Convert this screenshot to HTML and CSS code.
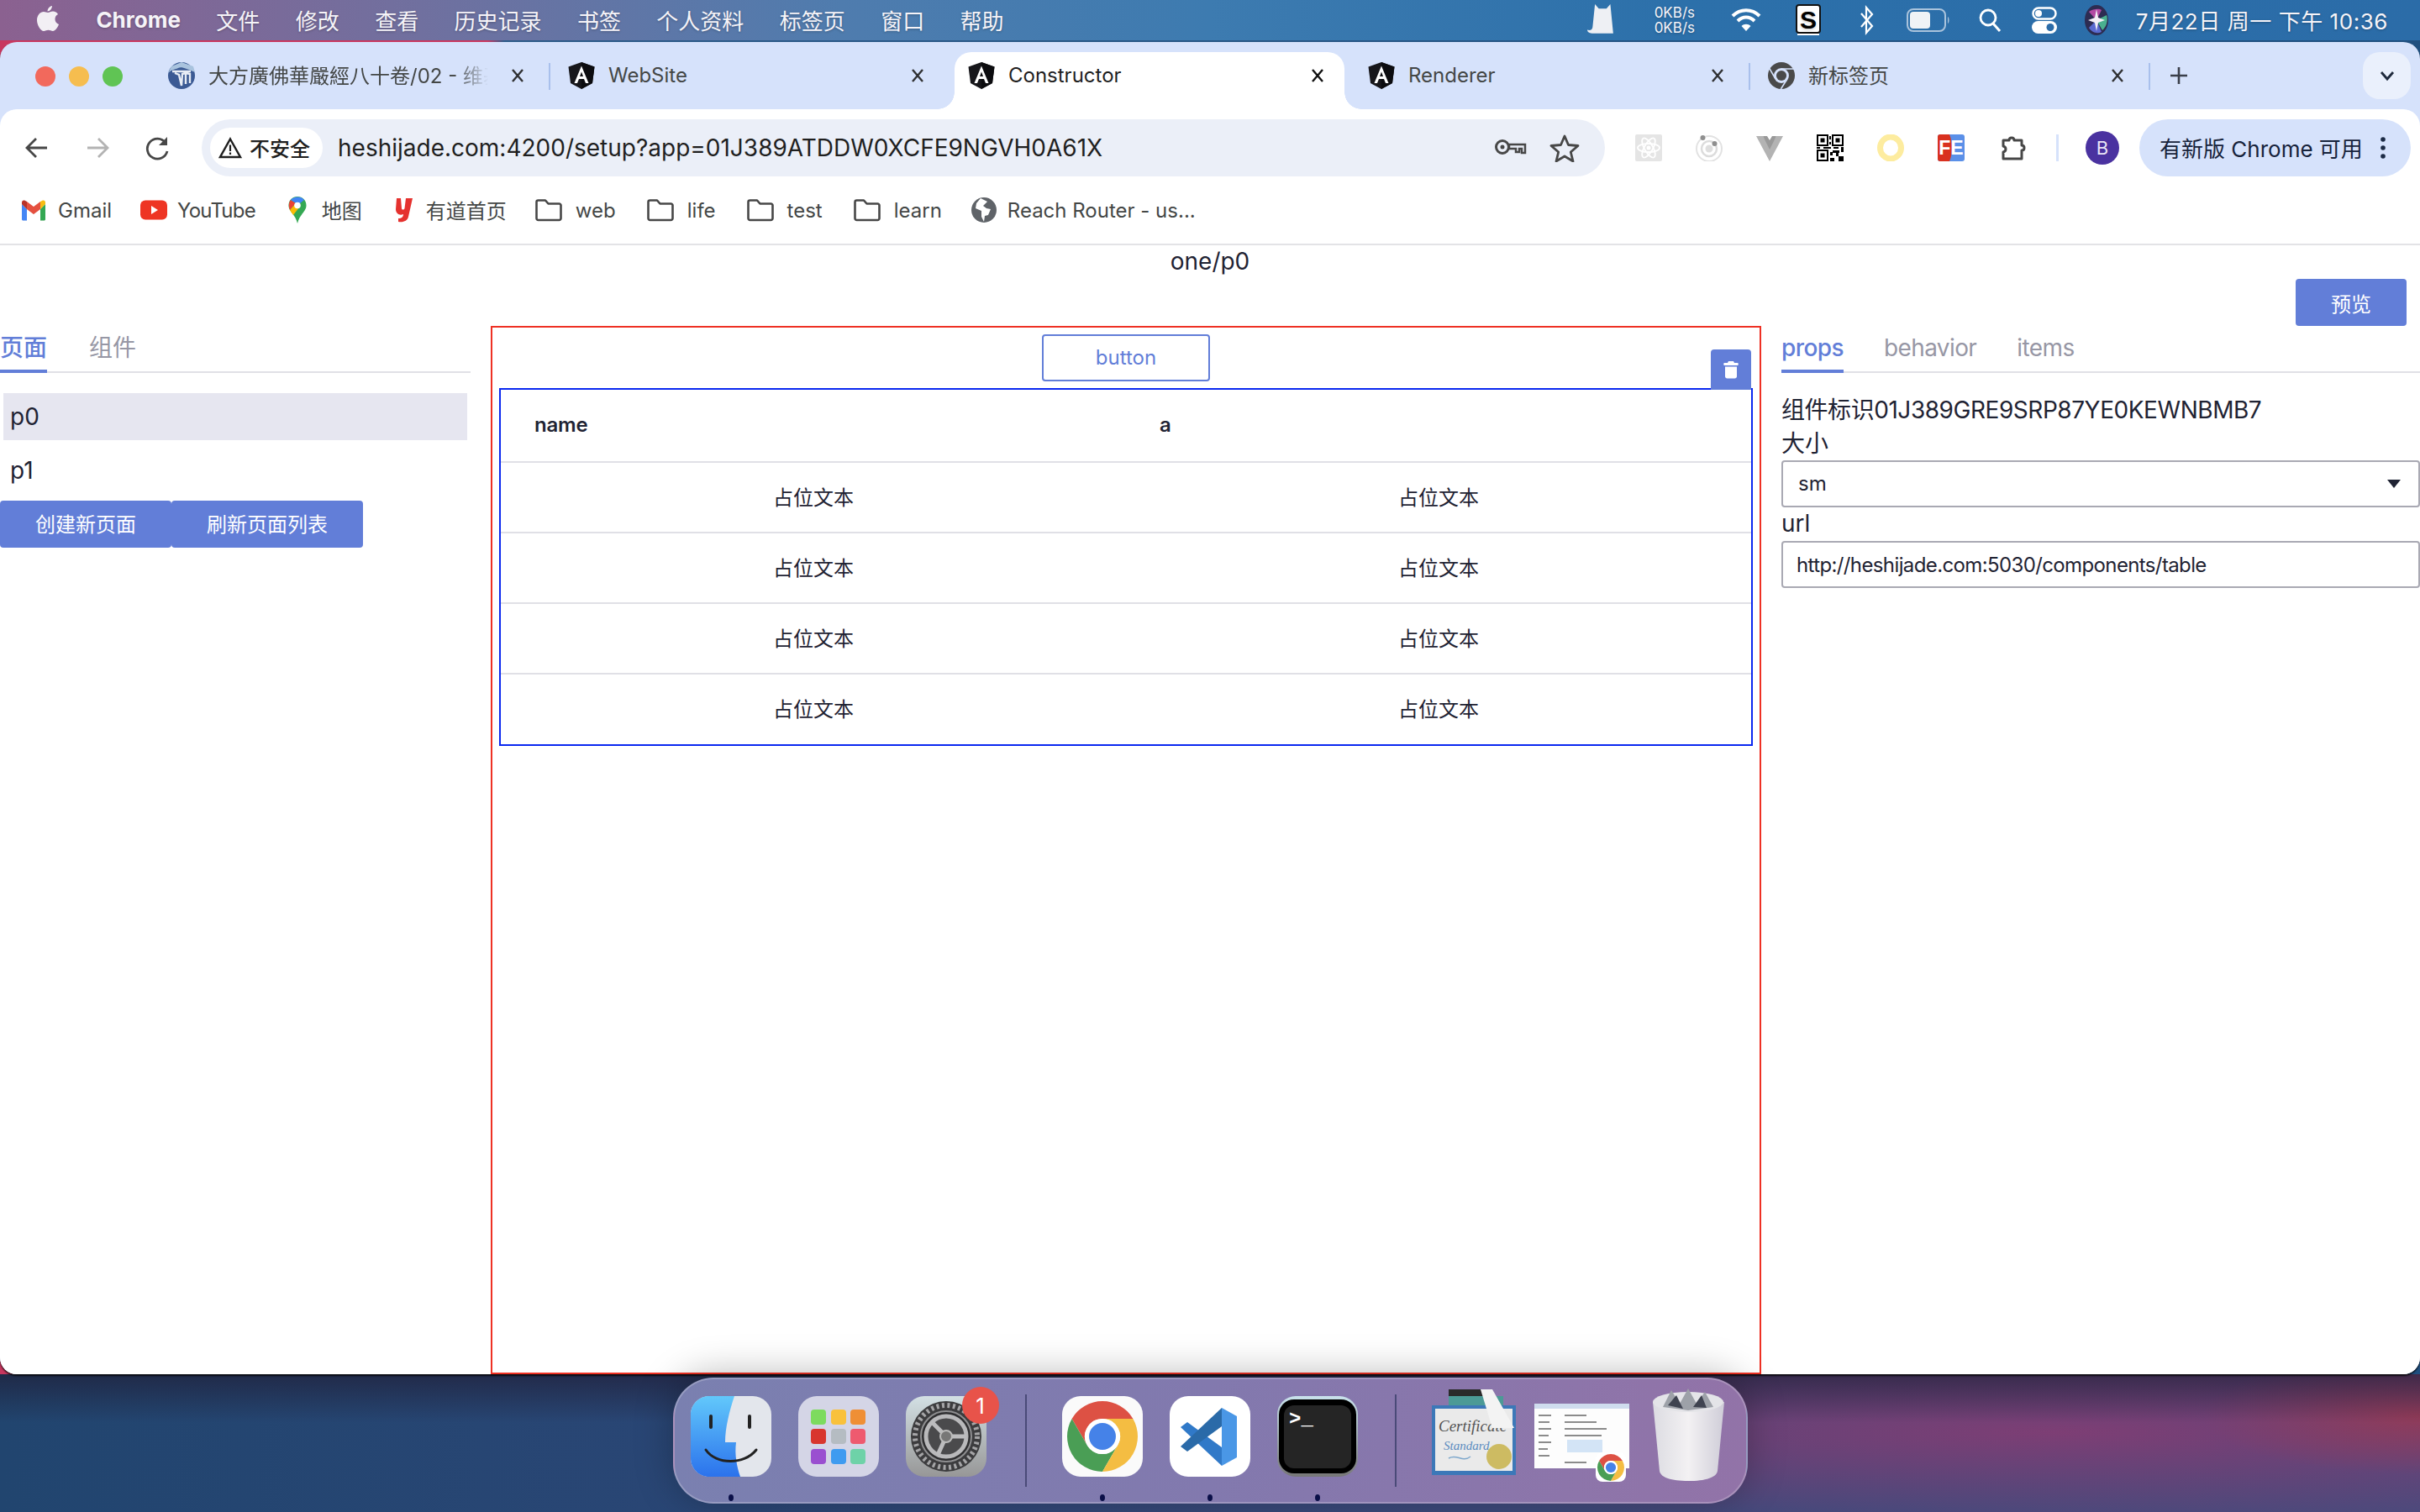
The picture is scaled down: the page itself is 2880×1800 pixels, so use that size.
FILE: index.html
```html
<!DOCTYPE html>
<html lang="zh-CN">
<head>
<meta charset="utf-8">
<title>Constructor</title>
<link rel="stylesheet" href="styles.css">
</head>
<body>
<svg class="defs" width="0" height="0">
  <defs>
    <symbol id="ng" viewBox="0 0 32 32"><path d="M16 0 31.500 5.500 29 25 16 32 3 25 .5 5.500Z" fill="#16161a"/><path d="M16 0 31.500 5.500 29 25 16 32Z" fill="#0c0c0f"/><path d="M16 4.500 7.500 25H11L13 20H19L21 25H24.500ZM16 11.500 18 17H14Z" fill="#fff" fill-rule="evenodd"/></symbol>
    <symbol id="close" viewBox="0 0 24 24"><path d="M6 5 18 19M18 5 6 19" stroke="currentColor" stroke-width="2.400" fill="none"/></symbol>
    <symbol id="folder" viewBox="0 0 32 32"><path d="M1.500 6.500C1.500 5 2.500 4.500 3.500 4.500H12L15.500 8.500H28.500C29.500 8.500 30.500 9.500 30.500 10.500V26C30.500 27 29.500 28 28.500 28H3.500C2.500 28 1.500 27 1.500 26Z" fill="none" stroke="#474747" stroke-width="2.600" stroke-linejoin="round"/></symbol>
    <linearGradient id="finderL" x1="0" y1="0" x2="0" y2="1"><stop offset="0" stop-color="#62c8fb"/><stop offset="1" stop-color="#2b72ec"/></linearGradient>
    <linearGradient id="gearBg" x1="0" y1="0" x2="0" y2="1"><stop offset="0" stop-color="#d3e0e4"/><stop offset="1" stop-color="#979797"/></linearGradient>
    <linearGradient id="termBg" x1="0" y1="0" x2="0" y2="1"><stop offset="0" stop-color="#c9e2ec"/><stop offset="1" stop-color="#777"/></linearGradient>
    <linearGradient id="trashBg" x1="0" y1="0" x2="1" y2="0"><stop offset="0" stop-color="#dcdce2"/><stop offset=".5" stop-color="#f3f1f3"/><stop offset="1" stop-color="#cfcdd8"/></linearGradient>
  </defs>
</svg>

<header class="menubar">
  <div class="menu-left">
    <svg class="apple" width="28" height="32" viewBox="0 0 28 32"><path d="M19 1C19 4 16.500 7.500 13.500 7.500 13.500 4.500 16 1.500 19 1ZM14 9C15.500 9 17.500 7.500 20 7.500 22.500 7.500 25 9 26 11 23 12.500 22.500 15 22.500 17 22.500 20 24.500 22 27 23 25.500 27 22.500 31 20 31 18 31 16.500 29.800 14.500 29.800 12.500 29.800 11 31 9 31 5.500 31 1 24 1 18 1 12 5 8 9 8 10.800 8 12.800 9 14 9Z" fill="#f2eff4"/></svg>
    <strong class="menu-app">Chrome</strong>
    <span>文件</span><span>修改</span><span>查看</span><span>历史记录</span><span>书签</span><span>个人资料</span><span>标签页</span><span>窗口</span><span>帮助</span>
  </div>
  <div class="menu-right">
    <svg class="st st-cat" width="32" height="40" viewBox="0 0 28 38" preserveAspectRatio="none"><path d="M8 1 12 6H20L24 1 27 34H6C3 34 0 33 0 30 3 31 5 30 5.500 27Z" fill="#eef0f4"/></svg>
    <div class="netspeed"><span>0KB/s</span><span>0KB/s</span></div>
    <svg class="st st-wifi" width="36" height="28" viewBox="0 0 36 28"><path d="M2 9C11 0 25 0 34 9" stroke="#fff" stroke-width="4" fill="none"/><path d="M8 15C14 9 22 9 28 15" stroke="#fff" stroke-width="4" fill="none"/><path d="M18 27 12.500 21C15.500 18 20.500 18 23.500 21Z" fill="#fff"/></svg>
    <svg class="st st-s" width="30" height="38" viewBox="0 0 30 38"><rect x="1" y="1" width="28" height="33" rx="3" fill="#fff" stroke="#111" stroke-width="2"/><path d="M2 36H28" stroke="#fff" stroke-width="2"/><text x="15" y="29" text-anchor="middle" class="s-letter">S</text></svg>
    <svg class="st st-bt" width="20" height="36" viewBox="0 0 20 36"><path d="M3 10 16 25 9 33V3L16 11 3 26" stroke="#fff" stroke-width="2.200" fill="none"/></svg>
    <svg class="st st-batt" width="52" height="30" viewBox="0 0 52 30"><rect x="1" y="2" width="45" height="26" rx="7" fill="none" stroke="#a9c3dc" stroke-width="2"/><rect x="4" y="5" width="24" height="20" rx="4" fill="#f0f3f6"/><path d="M49 11V19C51 18 51 12 49 11Z" fill="#a9c3dc"/></svg>
    <svg class="st st-search" width="28" height="30" viewBox="0 0 28 30"><circle cx="12" cy="12" r="9" fill="none" stroke="#fff" stroke-width="2.800"/><path d="M18 19 26 28" stroke="#fff" stroke-width="3"/></svg>
    <svg class="st st-ctl" width="30" height="32" viewBox="0 0 30 32"><rect x="1.500" y="1.500" width="27" height="13" rx="6.500" fill="none" stroke="#fff" stroke-width="2.500"/><circle cx="8" cy="8" r="4" fill="#fff"/><rect x="0" y="17" width="30" height="15" rx="7.500" fill="#fff"/><circle cx="22" cy="24.500" r="4.500" fill="#2c6ca8"/></svg>
    <svg class="st st-siri" width="28" height="36" viewBox="0 0 28 36"><ellipse cx="14" cy="18" rx="14" ry="18" fill="#2d2c52"/><path d="M14 18 5 8C10 4 18 4 20 6Z" fill="#b34aa4"/><path d="M14 18 26 12C28 18 26 26 21 30Z" fill="#4ab08f"/><path d="M14 18 20 32C14 35 8 32 5 27Z" fill="#5a6ad0"/><path d="M14 5 16 15 24 18 16 21 14 31 12 21 4 18 12 15Z" fill="#f4f0f6"/></svg>
    <time class="clock">7月22日 周一 下午 10:36</time>
  </div>
</header>

<main class="window">
  <div class="tabstrip">
    <div class="lights"><i class="light l-r"></i><i class="light l-y"></i><i class="light l-g"></i></div>
    <div class="tab">
      <svg class="favicon" viewBox="0 0 32 32"><circle cx="16" cy="16" r="16" fill="#3b5a94"/><path d="M0 13C5 8 8 9 12 7 16 5 22 8 32 12L30 5 16 0 4 5Z" fill="#a9c3de"/><path d="M5 11H27M8 13 13 15 16 28 17 14 21 13 21 26M21 13 26 14 26 25" stroke="#e8edf5" stroke-width="2.400" fill="none"/></svg>
      <span class="tab-title cjk fade">大方廣佛華嚴經八十卷/02 - 维基</span>
      <svg class="tab-close"><use href="#close"/></svg>
    </div>
    <i class="tab-sep"></i>
    <div class="tab">
      <svg class="favicon"><use href="#ng"/></svg>
      <span class="tab-title">WebSite</span>
      <svg class="tab-close"><use href="#close"/></svg>
    </div>
    <i class="tab-sep off"></i>
    <div class="tab active">
      <svg class="favicon"><use href="#ng"/></svg>
      <span class="tab-title">Constructor</span>
      <svg class="tab-close"><use href="#close"/></svg>
    </div>
    <i class="tab-sep off"></i>
    <div class="tab">
      <svg class="favicon"><use href="#ng"/></svg>
      <span class="tab-title">Renderer</span>
      <svg class="tab-close"><use href="#close"/></svg>
    </div>
    <i class="tab-sep"></i>
    <div class="tab">
      <svg class="favicon" viewBox="0 0 100 100"><circle cx="50" cy="50" r="50" fill="#4a4a4a"/><path d="M50 25H96M28.300 62.500 5 22M71.700 62.500 48 100" stroke="#d6e2fb" stroke-width="5" fill="none"/><circle cx="50" cy="50" r="28" fill="#d6e2fb"/><circle cx="50" cy="50" r="19" fill="#4a4a4a"/></svg>
      <span class="tab-title cjk">新标签页</span>
      <svg class="tab-close"><use href="#close"/></svg>
    </div>
    <i class="tab-sep"></i>
    <svg class="tab-plus" width="24" height="24" viewBox="0 0 24 24"><path d="M12 2V22M2 12H22" stroke="#3a3f4a" stroke-width="2.600"/></svg>
    <div class="tab-menu"><svg width="20" height="14" viewBox="0 0 20 14"><path d="M3 3 10 11 17 3" fill="none" stroke="#1f2a3c" stroke-width="2.800"/></svg></div>
  </div>

  <div class="toolbar">
    <svg class="nav" viewBox="0 0 40 40"><path d="M32 20H9M19 9 8 20 19 31" fill="none" stroke="#474747" stroke-width="2.800"/></svg>
    <svg class="nav" viewBox="0 0 40 40"><path d="M8 20H31M21 9 32 20 21 31" fill="none" stroke="#b3b3b3" stroke-width="2.800"/></svg>
    <svg class="nav" viewBox="0 0 40 40"><path d="M29 14A12 12 0 1 0 31 24" fill="none" stroke="#474747" stroke-width="2.800"/><path d="M31 7V17H21Z" fill="#474747"/></svg>
    <div class="omnibox">
      <div class="chip">
        <svg width="28" height="26" viewBox="0 0 28 26"><path d="M14 2.500 26 24H2Z" fill="none" stroke="#1f1f1f" stroke-width="2.400"/><path d="M14 9.500V17M14 18.500V21" stroke="#1f1f1f" stroke-width="2.200"/></svg>
        <span>不安全</span>
      </div>
      <span class="url">heshijade.com:4200/setup?app=01J389ATDDW0XCFE9NGVH0A61X</span>
      <svg class="omni-key" width="40" height="30" viewBox="0 0 40 30"><circle cx="10" cy="14" r="7.500" fill="none" stroke="#474747" stroke-width="3"/><circle cx="10" cy="14" r="2.500" fill="#474747"/><path d="M18 11H37V21H33V16H30V20H26V16H18Z" fill="none" stroke="#474747" stroke-width="2.500"/></svg>
      <svg class="omni-star" width="40" height="34" viewBox="0 0 40 34"><path d="M20 3 24.500 13.500 36 14.500 27.300 22 30 33 20 27 10 33 12.700 22 4 14.500 15.500 13.500Z" fill="none" stroke="#474747" stroke-width="2.800" stroke-linejoin="round"/></svg>
    </div>
    <div class="extensions">
      <svg class="ext" viewBox="0 0 32 32"><rect width="32" height="32" rx="2" fill="#e5e5e5"/><g fill="none" stroke="#fff" stroke-width="1.800"><ellipse cx="16" cy="16" rx="13" ry="5"/><ellipse cx="16" cy="16" rx="13" ry="5" transform="rotate(60 16 16)"/><ellipse cx="16" cy="16" rx="13" ry="5" transform="rotate(120 16 16)"/></g><circle cx="16" cy="16" r="2.500" fill="#fff"/></svg>
      <svg class="ext" viewBox="0 0 32 32"><circle cx="16" cy="17" r="15" fill="none" stroke="#e2e2e2" stroke-width="2"/><circle cx="16" cy="17" r="9" fill="none" stroke="#dcdcdc" stroke-width="2.500"/><circle cx="16" cy="17" r="4.500" fill="#dedede"/><circle cx="8.500" cy="4" r="3" fill="#8f8f8f"/><circle cx="22.500" cy="11" r="3" fill="#8f8f8f"/></svg>
      <svg class="ext" viewBox="0 0 32 32"><path d="M0 2H8L16 15 24 2H32L16 32Z" fill="#b3b3b3"/><path d="M8 2H13L16 7 19 2H24L16 18Z" fill="#999"/></svg>
      <svg class="ext" viewBox="0 0 32 32"><path d="M0 0H14V14H0ZM18 0H32V14H18ZM0 18H14V32H0Z" fill="#000"/><path d="M2 2H12V12H2ZM20 2H30V12H20ZM2 20H12V30H2Z" fill="#fff"/><path d="M4.500 4.500H9.500V9.500H4.500ZM22.500 4.500H27.500V9.500H22.500ZM4.500 22.500H9.500V27.500H4.500ZM15 2H17V6H15ZM15 9H17V12H15ZM0 15H4V17H0ZM8 15H17V17H8ZM20 15H26V17H20ZM29 15H32V21H29ZM19 19H27V22H19ZM16 21H19V25H16ZM23 22H26V26H23ZM16 28H21V32H16ZM26 26H32V32H26Z" fill="#000"/></svg>
      <svg class="ext" viewBox="0 0 32 32"><ellipse cx="16" cy="16" rx="12.500" ry="13" fill="none" stroke="#fdec9f" stroke-width="7"/></svg>
      <svg class="ext" viewBox="0 0 32 32"><rect width="32" height="32" rx="3" fill="#5b90e8"/><path d="M3 0H14C18 10 18 22 14 32H3C1 32 0 31 0 29V3C0 1 1 0 3 0Z" fill="#d9311f"/><text x="16" y="24" text-anchor="middle" class="fe-letter">FE</text></svg>
      <svg class="ext ext-puzzle" viewBox="0 0 32 32"><path d="M4 7H11C11 3 17 3 17 7H26V13C30 13 30 19 26 19V29H4V21C8 20 8 15 4 14Z" fill="none" stroke="#474747" stroke-width="3" stroke-linejoin="round"/></svg>
    </div>
    <i class="toolbar-sep"></i>
    <div class="avatar">B</div>
    <div class="update">
      <span class="raise">有新版 Chrome 可用</span>
      <svg width="8" height="28" viewBox="0 0 8 28"><circle cx="4" cy="4" r="2.800" fill="#1b2a44"/><circle cx="4" cy="14" r="2.800" fill="#1b2a44"/><circle cx="4" cy="24" r="2.800" fill="#1b2a44"/></svg>
    </div>
  </div>

  <nav class="bookmarks">
    <a class="bm bm-gmail"><svg class="bm-ico" viewBox="0 0 32 32"><path d="M2 8 16 19 30 8V27C30 28 29 28.500 28 28.500H24V15L16 21 8 15V28.500H4C3 28.500 2 28 2 27Z" fill="#d9d9d9"/><path d="M2 9V27C2 28 3 28.500 4 28.500H8V15Z" fill="#4586f5"/><path d="M24 15V28.500H28C29 28.500 30 28 30 27V9Z" fill="#34a853"/><path d="M8 15 16 21 24 15V6L16 12 8 6Z" fill="#e5503f"/><path d="M2 9V7C2 4 5 3.500 8 6V15Z" fill="#b93329"/><path d="M24 6C27 3.500 30 4 30 7V9L24 15Z" fill="#f7bd13"/></svg><span>Gmail</span></a>
    <a class="bm bm-yt"><svg class="bm-ico" viewBox="0 0 32 32"><rect y="4.500" width="32" height="23" rx="6" fill="#ee3524"/><path d="M13 11 21 16 13 21Z" fill="#fff"/></svg><span class="tight">YouTube</span></a>
    <a class="bm bm-map"><svg class="bm-ico" viewBox="0 0 32 32"><path d="M16 0C22 0 26.500 4.500 26.500 10.500 26.500 18 18.500 21 16 32 13.500 21 5.500 18 5.500 10.500 5.500 4.500 10 0 16 0Z" fill="#34a853"/><path d="M8 4 14 8 7 16C5.500 12 5 8 8 4Z" fill="#ea4335"/><path d="M7 16 14 8 18 13 11 22C9.500 20 8 18 7 16Z" fill="#fbbc04"/><path d="M8 4C11 0 20 -1.500 24 4L18 9 14 8Z" fill="#4285f4"/><circle cx="16" cy="10.500" r="3.800" fill="#fff"/></svg><span class="raise">地图</span></a>
    <a class="bm bm-yd"><svg class="bm-ico" viewBox="0 0 32 32"><path d="M7 2H12L13 14C13 16 16 16 16.500 14L18 2H26L21 24C20 29 15 31 9 30L9 26C13 26 15 24 15 21 10 23 6 20 6 15Z" fill="#e5312e"/></svg><span class="raise">有道首页</span></a>
    <a class="bm bm-folder"><svg class="bm-ico"><use href="#folder"/></svg><span>web</span></a>
    <a class="bm bm-folder"><svg class="bm-ico"><use href="#folder"/></svg><span>life</span></a>
    <a class="bm bm-folder"><svg class="bm-ico"><use href="#folder"/></svg><span>test</span></a>
    <a class="bm bm-folder"><svg class="bm-ico"><use href="#folder"/></svg><span>learn</span></a>
    <a class="bm bm-globe"><svg class="bm-ico" viewBox="0 0 32 32"><circle cx="16" cy="16" r="15" fill="#5f6368"/><path d="M12 2 20 6 15 11 19 14 24 15 21 22 17 23 16 30 13 24 13 17 6 14 7 8Z" fill="#fff"/></svg><span>Reach Router - us...</span></a>
  </nav>

  <section class="page">
    <h1 class="page-title">one/p0</h1>
    <div class="page-actions"><button class="btn btn-preview">预览</button></div>
    <div class="workspace">
      <aside class="panel panel-left">
        <div class="tabs">
          <span class="ptab on">页面</span>
          <span class="ptab">组件</span>
        </div>
        <ul class="pages">
          <li class="page-item on">p0</li>
          <li class="page-item">p1</li>
        </ul>
        <div class="btn-row">
          <button class="btn btn-new">创建新页面</button>
          <button class="btn btn-refresh">刷新页面列表</button>
        </div>
      </aside>
      <div class="canvas">
        <div class="canvas-btn-row"><button class="btn-outline">button</button></div>
        <div class="selected">
          <button class="trash" aria-label="删除">
            <svg width="18" height="22" viewBox="0 0 18 22"><path d="M6 1H12L13 3H17C18 3 18 6 17 6H1C0 6 0 3 1 3H5ZM2 7.500H16V19C16 20.500 15 21.500 13.500 21.500H4.500C3 21.500 2 20.500 2 19Z" fill="#fff"/></svg>
          </button>
          <table class="grid-table">
            <thead><tr><th>name</th><th>a</th></tr></thead>
            <tbody>
              <tr><td>占位文本</td><td>占位文本</td></tr>
              <tr><td>占位文本</td><td>占位文本</td></tr>
              <tr><td>占位文本</td><td>占位文本</td></tr>
              <tr><td>占位文本</td><td>占位文本</td></tr>
            </tbody>
          </table>
        </div>
      </div>
      <aside class="panel panel-right">
        <div class="tabs">
          <span class="ptab on">props</span>
          <span class="ptab">behavior</span>
          <span class="ptab">items</span>
        </div>
        <div class="props">
          <div class="prop-line prop-id">组件标识01J389GRE9SRP87YE0KEWNBMB7</div>
          <div class="prop-line">大小</div>
          <div class="field field-select"><span class="raise">sm</span><svg width="16" height="10" viewBox="0 0 16 10"><path d="M0 0H16L8 10Z" fill="#1f2333"/></svg></div>
          <div class="prop-line">url</div>
          <div class="field field-url"><span>http://heshijade.com:5030/components/table</span></div>
        </div>
      </aside>
    </div>
  </section>
</main>

<footer class="dock-area">
  <div class="dock">
    <div class="slot s-main">
      <svg class="dock-ico" viewBox="0 0 96 96"><rect width="96" height="96" rx="22" fill="#e3e6ec"/><path d="M22 0H52C46 18 41 38 41 55H54C52 70 55 84 59 96H22C10 96 0 86 0 74V22C0 10 10 0 22 0Z" fill="url(#finderL)"/><path d="M24 24V37M70 24V37" stroke="#222" stroke-width="4" stroke-linecap="round"/><path d="M18 64C30 82 64 82 78 64" stroke="#222" stroke-width="3" fill="none" stroke-linecap="round"/></svg>
      <i class="dock-dot"></i>
    </div>
    <div class="slot s-main">
      <svg class="dock-ico" viewBox="0 0 96 96"><rect width="96" height="96" rx="22" fill="#d4d5e6"/><g><rect x="15" y="16" width="18" height="18" rx="4" fill="#7ddb5e"/><rect x="39" y="16" width="18" height="18" rx="4" fill="#f9c13c"/><rect x="62" y="16" width="18" height="18" rx="4" fill="#ef8f35"/><rect x="15" y="39" width="18" height="18" rx="4" fill="#d8362e"/><rect x="39" y="39" width="18" height="18" rx="4" fill="#b5bcc2"/><rect x="62" y="39" width="18" height="18" rx="4" fill="#ee5a6f"/><rect x="15" y="63" width="18" height="18" rx="4" fill="#9a4fd0"/><rect x="39" y="63" width="18" height="18" rx="4" fill="#3f9bf0"/><rect x="62" y="63" width="18" height="18" rx="4" fill="#6ed2a8"/></g></svg>
    </div>
    <div class="slot s-main">
      <svg class="dock-ico" viewBox="0 0 96 96"><rect width="96" height="96" rx="22" fill="url(#gearBg)"/><circle cx="48" cy="48" r="42" fill="#3c3c3e"/><circle cx="48" cy="48" r="37" fill="none" stroke="#a5a5a7" stroke-width="6" stroke-dasharray="3 3.500"/><circle cx="48" cy="48" r="30" fill="#2f2f31" stroke="#8f8f91" stroke-width="2"/><circle cx="48" cy="48" r="24" fill="#4a4a4c" stroke="#b9b9bb" stroke-width="5"/><path d="M48 48 30 30M48 48 72 48M48 48 38 70" stroke="#bcbcbe" stroke-width="5"/><circle cx="48" cy="48" r="7" fill="#777" stroke="#bbb" stroke-width="2"/></svg>
      <span class="dock-badge">1</span>
    </div>
    <i class="dock-sep"></i>
    <div class="slot s-main">
      <svg class="dock-ico" viewBox="0 0 96 96"><rect width="96" height="96" rx="22" fill="#fafafa"/><g transform="translate(6 6) scale(.84)"><path d="M50 25H93.300A50 50 0 0 0 6.700 25L28.300 62.500A25 25 0 0 1 50 25Z" fill="#dd5144"/><path d="M6.700 25A50 50 0 0 0 50 100L71.700 62.500A25 25 0 0 1 28.300 62.500Z" fill="#4a9e55"/><path d="M93.300 25A50 50 0 0 1 50 100L71.700 62.500A25 25 0 0 0 50 25Z" fill="#f4bd42"/><circle cx="50" cy="50" r="25" fill="#fff"/><circle cx="50" cy="50" r="19" fill="#4582e8"/></g></svg>
      <i class="dock-dot"></i>
    </div>
    <div class="slot s-main">
      <svg class="dock-ico" viewBox="0 0 96 96"><rect width="96" height="96" rx="22" fill="#fff"/><path d="M62 83 62 61 21 31 13 37Z" fill="#3079c8"/><path d="M62 14 62 36 21 66 13 60Z" fill="#2a6aa8"/><path d="M62 14 80 24V73L62 83Z" fill="#4a97e6"/></svg>
      <i class="dock-dot"></i>
    </div>
    <div class="slot s-main">
      <svg class="dock-ico" viewBox="0 0 96 96"><rect width="96" height="96" rx="22" fill="url(#termBg)"/><rect x="2" y="4" width="92" height="88" rx="18" fill="#000"/><rect x="8" y="11" width="80" height="75" rx="12" fill="#252525"/><text x="14" y="34" class="term-text">&gt;_</text></svg>
      <i class="dock-dot"></i>
    </div>
    <i class="dock-sep dock-sep-b"></i>
    <div class="slot s-cert">
      <svg class="dock-ico" width="100" height="105" viewBox="0 0 100 105"><rect x="20" y="2" width="50" height="20" fill="#2a2a2a"/><rect x="20" y="10" width="65" height="14" fill="#4b9a96"/><rect x="0" y="21" width="100" height="83" fill="#3c78b8"/><rect x="4" y="25" width="92" height="74" fill="#eaeaea"/><text x="8" y="52" class="cert-a">Certificate</text><text x="14" y="74" class="cert-b">Standard</text><path d="M20 84C30 78 36 90 46 82" stroke="#7fa8cc" stroke-width="1.500" fill="none"/><circle cx="80" cy="82" r="15" fill="#cdbb62"/><path d="M58 2H72L98 48H72Z" fill="#f3f3f3"/></svg>
    </div>
    <div class="slot s-doc">
      <svg class="dock-ico" width="113" height="93" viewBox="0 0 113 93"><rect width="113" height="77" fill="#fdfdfd"/><rect width="113" height="6" fill="#cfdcee"/><rect x="39" y="43" width="42" height="15" fill="#d3e4f6"/><g stroke="#8b8b8b" stroke-width="2"><path d="M5 14H20M5 22H18M5 30H20M5 38H17M5 46H20M5 54H16M5 62H18"/><path d="M36 14H62M36 22H74M36 30H86M36 38H80"/><path d="M36 70H62"/></g><g transform="translate(73 58)"><rect width="36" height="35" rx="8" fill="#fff"/><g transform="translate(2 2) scale(.32)"><path d="M50 25H93.300A50 50 0 0 0 6.700 25L28.300 62.500A25 25 0 0 1 50 25Z" fill="#dd5144"/><path d="M6.700 25A50 50 0 0 0 50 100L71.700 62.500A25 25 0 0 1 28.300 62.500Z" fill="#4a9e55"/><path d="M93.300 25A50 50 0 0 1 50 100L71.700 62.500A25 25 0 0 0 50 25Z" fill="#f4bd42"/><circle cx="50" cy="50" r="25" fill="#fff"/><circle cx="50" cy="50" r="19" fill="#4582e8"/></g></g></svg>
    </div>
    <div class="slot s-trash">
      <svg class="dock-ico" width="85" height="112" viewBox="0 0 85 112"><path d="M0 18 8 100C9 108 22 112 42 112 62 112 76 108 77 100L85 18Z" fill="url(#trashBg)"/><ellipse cx="42" cy="18" rx="42" ry="12" fill="#e4e4e8"/><path d="M12 24 22 4 32 20 42 2 52 20 62 6 72 24 42 28Z" fill="#9da1a8"/><path d="M18 22 28 10 36 26ZM48 24 58 10 64 25Z" fill="#3f4350"/></svg>
    </div>
  </div>
</footer>
</body>
</html>
```
FILE: styles.css
```css
* { box-sizing: border-box; }
html, body { margin: 0; padding: 0; }
body {
  width: 2880px;
  height: 1800px;
  overflow: hidden;
  display: flex;
  flex-direction: column;
  font-family: Inter, "Noto Sans CJK SC", sans-serif;
  color: #1f2333;
  background: linear-gradient(to right, #c8375f 0, #c8375f 580px, #2c5a88 600px, #1f4f7f 100%);
}
.defs { position: absolute; }
ul { list-style: none; margin: 0; padding: 0; }
button { font-family: inherit; cursor: pointer; }
.raise { padding-bottom: 2px; }

/* menu bar */
.menubar {
  height: 48px;
  flex: none;
  margin-bottom: 2px;
  display: flex;
  justify-content: space-between;
  align-items: center;
  color: #f6f4f8;
  font-size: 26px;
  background: linear-gradient(to right, #8b6190 0, #70709f 500px, #4f7cae 1000px, #3d7bb0 1440px, #2c70aa 2000px, #2b6ca8 100%);
  text-shadow: 0 1px 3px rgba(0, 0, 0, .25);
}
.menu-left { display: flex; align-items: center; gap: 42.400px; padding: 0 0 2px 43px; }
.apple { margin-top: -2px; }
.menu-app { font-weight: 700; font-size: 26px; margin-left: 1px; }
.menu-right { display: flex; align-items: center; padding-right: 38px; }
.st { display: block; flex: none; }
.st-cat { margin-right: 48px; }
.netspeed { display: flex; flex-direction: column; width: 52px; font-size: 17px; line-height: 18px; margin-right: 39px; }
.st-wifi { margin-right: 41px; }
.st-s { margin-right: 45px; }
.st-bt { margin-right: 37px; }
.st-batt { margin-right: 33px; }
.st-search { margin-right: 36px; }
.st-ctl { margin-right: 33px; }
.st-siri { margin-right: 33px; }
.s-letter { font: 900 30px "Liberation Sans", sans-serif; fill: #000; }
.clock { font-size: 26px; white-space: nowrap; letter-spacing: .55px; padding-bottom: 2px; }

/* window */
.window {
  position: relative;
  z-index: 1;
  flex: none;
  height: 1586px;
  display: flex;
  flex-direction: column;
  background: #d6e2fb;
  border-radius: 20px;
  overflow: hidden;
  box-shadow: 0 2px 2px rgba(0, 0, 0, .8);
}
.tabstrip {
  height: 80px;
  flex: none;
  display: flex;
  align-items: stretch;
  padding-top: 12px;
  position: relative;
}
.lights { width: 184px; display: flex; gap: 16px; padding: 17px 0 0 42px; flex: none; }
.light { width: 24px; height: 24px; border-radius: 50%; }
.l-r { background: #f2695c; }
.l-y { background: #f6bd4f; }
.l-g { background: #60c454; }
.tab {
  position: relative;
  width: 464px;
  flex: none;
  display: flex;
  align-items: center;
  padding: 0 20px 12px 16px;
  font-size: 24px;
  color: #444746;
  border-radius: 20px 20px 0 0;
}
.tab.active { background: #fff; color: #1f1f1f; }
.tab.active::before, .tab.active::after {
  content: "";
  position: absolute;
  bottom: 0;
  width: 20px;
  height: 20px;
}
.tab.active::before { left: -20px; background: radial-gradient(circle at 0 0, transparent 19.500px, #fff 20px); }
.tab.active::after { right: -20px; background: radial-gradient(circle at 100% 0, transparent 19.500px, #fff 20px); }
.favicon { width: 32px; height: 32px; flex: none; margin-right: 16px; }
.tab-title { flex: 1; min-width: 0; white-space: nowrap; overflow: hidden; margin-right: 23px; padding-bottom: 2px; }
.tab-title.cjk { padding-bottom: 4px; }
.fade { -webkit-mask-image: linear-gradient(to right, #000 88%, transparent 100%); mask-image: linear-gradient(to right, #000 88%, transparent 100%); }
.tab-close { width: 24px; height: 24px; flex: none; color: #303133; }
.active .tab-close { color: #111; }
.tab-sep { width: 2px; height: 32px; margin: 13px 5px 0; flex: none; background: #a9c0ec; }
.tab-sep.off { background: transparent; }
.tab-plus { flex: none; margin: 16px 0 0 17px; }
.tab-menu {
  margin-left: auto;
  margin-right: 11px;
  width: 57px;
  height: 56px;
  border-radius: 20px;
  background: #eaf0fc;
  display: flex;
  align-items: center;
  justify-content: center;
}

.toolbar {
  flex: none;
  height: 84px;
  background: #fff;
  border-radius: 20px 20px 0 0;
  display: flex;
  align-items: flex-start;
  padding: 12px 0 0 24px;
}
.nav { width: 40px; height: 40px; flex: none; margin: 14px 32px 0 0; }
.omnibox {
  width: 1670px;
  height: 68px;
  flex: none;
  border-radius: 34px;
  background: #ebeff8;
  display: flex;
  align-items: center;
  padding: 0 28px 0 10px;
}
.chip {
  width: 134px;
  height: 48px;
  flex: none;
  border-radius: 24px;
  background: #fff;
  display: flex;
  align-items: center;
  gap: 9px;
  padding-left: 10px;
  font-size: 24px;
  font-weight: 500;
  color: #1f1f1f;
}
.chip span { padding-bottom: 2px; }
.url { margin-left: 18px; font-size: 28px; color: #1f1f1f; white-space: nowrap; }
.omni-key { margin-left: auto; }
.omni-star { margin-left: 24px; }
.extensions { display: flex; gap: 40px; margin: 18px 0 0 36px; }
.ext { width: 32px; height: 32px; display: block; }
.ext-puzzle { margin-left: 2px; }
.fe-letter { font: 700 23px "Liberation Sans", sans-serif; fill: #fff; }
.toolbar-sep { width: 3px; height: 32px; margin: 18px 0 0 35px; background: #d6e2fb; flex: none; }
.avatar {
  width: 40px;
  height: 40px;
  margin: 14px 0 0 32px;
  flex: none;
  border-radius: 50%;
  background: #4a32a0;
  color: #e9e6f7;
  font-size: 22px;
  display: flex;
  align-items: center;
  justify-content: center;
}
.update {
  width: 323px;
  height: 68px;
  margin-left: 24px;
  flex: none;
  border-radius: 34px;
  background: #d6e2fb;
  display: flex;
  align-items: center;
  justify-content: space-between;
  padding: 0 29px 0 24px;
  font-size: 26px;
  color: #17233b;
  white-space: nowrap;
}

.bookmarks {
  flex: none;
  height: 76px;
  background: #fff;
  display: flex;
  align-items: center;
  gap: 34px;
  padding: 0 0 4px 24px;
  font-size: 24px;
  color: #444746;
}
.bm { display: flex; align-items: center; gap: 14px; white-space: nowrap; }
.bm-ico { width: 32px; height: 32px; flex: none; }
.bm-gmail { gap: 13px; }
.bm-yt { gap: 12px; }
.bm-map { gap: 13px; }
.bm-yd { gap: 10px; }
.tight { letter-spacing: -.8px; }
.bm-folder { gap: 16px; margin-right: 3px; }
.bm-globe { margin-left: -3px; gap: 12px; }

/* page */
.page {
  flex: 1;
  min-height: 0;
  display: flex;
  flex-direction: column;
  background: #fff;
  border-top: 2px solid #e3e3e6;
}
.page-title { margin: 0; height: 40px; line-height: 38px; font-size: 28px; font-weight: 400; text-align: center; }
.page-actions { height: 56px; flex: none; display: flex; justify-content: flex-end; padding-right: 16px; }
.btn {
  height: 56px;
  border: 0;
  border-radius: 4px;
  background: #627ed8;
  color: #fff;
  font-size: 24px;
  padding: 0 0 4px;
}
.btn-preview { width: 132px; padding: 0; }
.btn-new { width: 204px; }
.btn-refresh { width: 228px; }
.workspace {
  flex: 1;
  min-height: 0;
  display: grid;
  grid-template-columns: 560px 1512px 760px;
  column-gap: 24px;
}
.tabs {
  height: 56px;
  display: flex;
  gap: 48px;
  border-bottom: 2px solid #e0e0e6;
}
.panel-left .tabs { gap: 50px; }
.panel-right .tabs { letter-spacing: -.600px; }
.ptab {
  height: 56px;
  line-height: 52px;
  font-size: 28px;
  color: #9797a5;
  white-space: nowrap;
}
.ptab.on { color: #627ed8; font-weight: 500; border-bottom: 4px solid #627ed8; }
.pages { display: flex; flex-direction: column; gap: 8px; margin-top: 24px; }
.page-item { height: 56px; margin: 0 4px; padding-left: 8px; line-height: 56px; font-size: 28px; }
.page-item.on { background: #e6e6f0; }
.btn-row { display: flex; margin-top: 8px; }

.canvas { border: 2px solid #ee3124; padding: 8px; display: flex; flex-direction: column; gap: 8px; }
.canvas-btn-row { display: flex; justify-content: center; }
.btn-outline {
  width: 200px;
  height: 56px;
  padding: 0 0 2px;
  border: 2px solid #627ed8;
  border-radius: 4px;
  background: #fff;
  color: #627ed8;
  font-size: 24px;
}
.selected { position: relative; border: 2px solid #0a28f0; }
.trash {
  position: absolute;
  right: 0;
  bottom: 100%;
  width: 48px;
  height: 48px;
  padding: 0;
  border: 0;
  border-radius: 4px 4px 0 0;
  background: #627ed8;
  display: flex;
  align-items: center;
  justify-content: center;
}
.grid-table { width: 100%; border-collapse: collapse; table-layout: fixed; font-size: 24px; }
.grid-table th { height: 86px; padding: 0 40px 2px; text-align: left; font-weight: 600; letter-spacing: -.2px; border-bottom: 2px solid #e0e0e6; }
.grid-table td { height: 84px; padding: 0 0 4px; text-align: center; border-bottom: 2px solid #e0e0e6; }
.grid-table tbody tr:last-child td { border-bottom: 0; }

.panel-right { min-width: 0; }
.props { margin-top: 24px; display: flex; flex-direction: column; font-size: 28px; }
.prop-line { height: 40px; line-height: 40px; white-space: nowrap; }
.prop-id { letter-spacing: -.450px; }
.field {
  height: 56px;
  border: 2px solid #a9a9b3;
  border-radius: 4px;
  padding: 0 16px;
  font-size: 24px;
  display: flex;
  align-items: center;
  justify-content: space-between;
}
.field + .prop-line { line-height: 38px; }
.field-select { padding-right: 21px; padding-left: 18px; }
.field-url { letter-spacing: -.620px; }

/* dock */
.dock-area {
  flex: 1;
  min-height: 0;
  display: flex;
  justify-content: center;
  padding-top: 4px;
  background:
    linear-gradient(to bottom, rgba(30, 20, 40, .55) 0, rgba(30, 20, 40, 0) 35%),
    radial-gradient(ellipse 260px 70px at 100% 30%, rgba(150, 58, 85, .9) 0, rgba(150, 58, 85, 0) 100%),
    radial-gradient(ellipse 1100px 110px at 85% 42%, rgba(135, 60, 115, .85) 0, rgba(135, 60, 115, 0) 100%),
    linear-gradient(to right, #21456f 0, #2a4675 30%, #3d4a7c 60%, #4a4a7c 100%);
}
.dock {
  position: relative;
  z-index: 2;
  width: 1279px;
  height: 150px;
  display: flex;
  align-items: flex-start;
  padding: 9px 0 0 19px;
  border: 2px solid rgba(255, 255, 255, .22);
  border-radius: 48px;
  background: linear-gradient(to right, #7a80b0, #8279ae 50%, #9273a8);
  box-shadow: 0 -4px 46px rgba(0, 0, 0, .28);
}
.slot { position: relative; flex: none; }
.s-main { width: 96px; height: 96px; margin: 11px 32px 0 0; }
.dock-ico { display: block; }
.s-main .dock-ico { width: 96px; height: 96px; }
.dock-dot { position: absolute; left: 45px; top: 117px; width: 6px; height: 8px; border-radius: 50%; background: #0a0f48; }
.dock-badge {
  position: absolute;
  top: -11px;
  right: -15px;
  width: 44px;
  height: 44px;
  border-radius: 50%;
  background: #e8534a;
  color: #fff;
  font-size: 26px;
  display: flex;
  align-items: center;
  justify-content: center;
}
.dock-sep { flex: none; width: 2px; height: 110px; margin: 9px 42px 0 14px; background: #4a4a78; }
.dock-sep-b { margin-left: 12px; }
.s-cert { width: 100px; margin: 1px 22px 0 0; }
.s-doc { width: 113px; margin: 20px 28px 0 0; }
.s-trash { width: 85px; margin-top: 0; }
.term-text { font: 700 24px "Liberation Mono", monospace; fill: #fff; }
.cert-a { font: italic 19px "Liberation Serif", serif; fill: #555; }
.cert-b { font: italic 15px "Liberation Serif", serif; fill: #5a8cc0; }
```
